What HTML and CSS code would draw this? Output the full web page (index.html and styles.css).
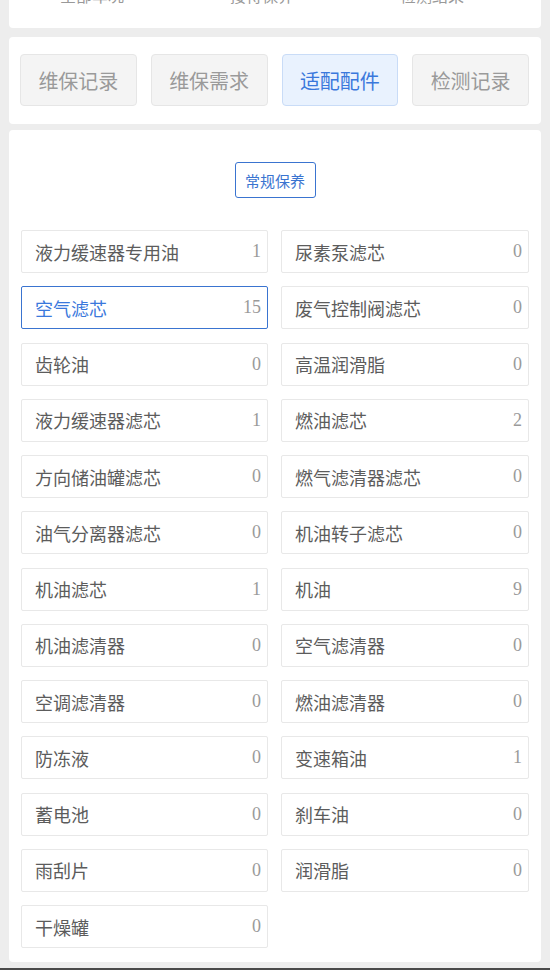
FILE: index.html
```html
<!DOCTYPE html>
<html lang="zh">
<head>
<meta charset="utf-8">
<link rel="stylesheet" href="styles.css">
</head>
<body>
<div class="card card-top">
  <div class="top-row">
    <span>全部车况</span>
    <span>接待保养</span>
    <span>检测结果</span>
  </div>
</div>
<div class="card card-tabs">
  <div class="tab">维保记录</div>
  <div class="tab">维保需求</div>
  <div class="tab active">适配配件</div>
  <div class="tab">检测记录</div>
</div>
<div class="card card-parts">
  <div class="pill-wrap"><span class="pill">常规保养</span></div>
  <div class="grid">
    <div class="item"><span class="name">液力缓速器专用油</span><span class="num">1</span></div>
    <div class="item"><span class="name">尿素泵滤芯</span><span class="num">0</span></div>
    <div class="item selected"><span class="name">空气滤芯</span><span class="num">15</span></div>
    <div class="item"><span class="name">废气控制阀滤芯</span><span class="num">0</span></div>
    <div class="item"><span class="name">齿轮油</span><span class="num">0</span></div>
    <div class="item"><span class="name">高温润滑脂</span><span class="num">0</span></div>
    <div class="item"><span class="name">液力缓速器滤芯</span><span class="num">1</span></div>
    <div class="item"><span class="name">燃油滤芯</span><span class="num">2</span></div>
    <div class="item"><span class="name">方向储油罐滤芯</span><span class="num">0</span></div>
    <div class="item"><span class="name">燃气滤清器滤芯</span><span class="num">0</span></div>
    <div class="item"><span class="name">油气分离器滤芯</span><span class="num">0</span></div>
    <div class="item"><span class="name">机油转子滤芯</span><span class="num">0</span></div>
    <div class="item"><span class="name">机油滤芯</span><span class="num">1</span></div>
    <div class="item"><span class="name">机油</span><span class="num">9</span></div>
    <div class="item"><span class="name">机油滤清器</span><span class="num">0</span></div>
    <div class="item"><span class="name">空气滤清器</span><span class="num">0</span></div>
    <div class="item"><span class="name">空调滤清器</span><span class="num">0</span></div>
    <div class="item"><span class="name">燃油滤清器</span><span class="num">0</span></div>
    <div class="item"><span class="name">防冻液</span><span class="num">0</span></div>
    <div class="item"><span class="name">变速箱油</span><span class="num">1</span></div>
    <div class="item"><span class="name">蓄电池</span><span class="num">0</span></div>
    <div class="item"><span class="name">刹车油</span><span class="num">0</span></div>
    <div class="item"><span class="name">雨刮片</span><span class="num">0</span></div>
    <div class="item"><span class="name">润滑脂</span><span class="num">0</span></div>
    <div class="item"><span class="name">干燥罐</span><span class="num">0</span></div>
  </div>
</div>
<div class="bottom-bar"></div>
</body>
</html>
```
FILE: styles.css
```css
html, body {
  margin: 0;
  padding: 0;
}
body {
  background: #ededed;
  padding: 0 9px;
  font-family: "Noto Sans CJK SC", "Noto Sans", sans-serif;
  height: 970px;
  overflow: hidden;
  box-sizing: border-box;
}
.card {
  background: #fff;
  border-radius: 4px;
}
.card-top {
  height: 28px;
  overflow: hidden;
  border-radius: 0 0 4px 4px;
}
.top-row {
  display: flex;
  justify-content: space-between;
  margin-top: -15px;
  font-size: 16px;
  line-height: 20px;
  color: #999;
  padding: 0 77px 0 51px;
}
.card-tabs {
  margin-top: 9px;
  padding: 17px 12px 18px 11px;
  display: grid;
  grid-template-columns: repeat(4, 1fr);
  column-gap: 14px;
}
.tab {
  height: 52px;
  box-sizing: border-box;
  background: #f4f4f4;
  border: 1px solid #e6e6e6;
  border-radius: 4px;
  display: flex;
  align-items: center;
  justify-content: center;
  font-size: 20px;
  color: #9a9a9a;
}
.tab.active {
  background: #e9f2fe;
  border-color: #c9dcf7;
  color: #3a78dc;
}
.card-parts {
  margin-top: 6px;
  padding: 32px 12px 14px;
}
.pill-wrap {
  display: flex;
  justify-content: center;
}
.pill {
  width: 81px;
  height: 36px;
  box-sizing: border-box;
  border: 1px solid #3a74d0;
  border-radius: 3px;
  color: #3a74d0;
  font-size: 15px;
  display: flex;
  align-items: center;
  justify-content: center;
}
.grid {
  margin-top: 32px;
  display: grid;
  grid-template-columns: 247px 248px;
  column-gap: 13px;
  row-gap: 13.25px;
}
.item {
  height: 43px;
  box-sizing: border-box;
  border: 1px solid #e8e8e8;
  border-radius: 2px;
  display: flex;
  align-items: center;
  justify-content: space-between;
  padding: 0 6px 0 13px;
}
.name {
  font-size: 18px;
  color: #5c5c5c;
}
.num {
  font-family: "Liberation Serif", serif;
  font-size: 18px;
  color: #9a9a9a;
}
.item.selected {
  border-color: #3a74d0;
}
.item.selected .name {
  color: #3a78dc;
}
.bottom-bar {
  position: fixed;
  left: 0;
  right: 0;
  bottom: 0;
  height: 2px;
  background: #4a4a4a;
}
```
